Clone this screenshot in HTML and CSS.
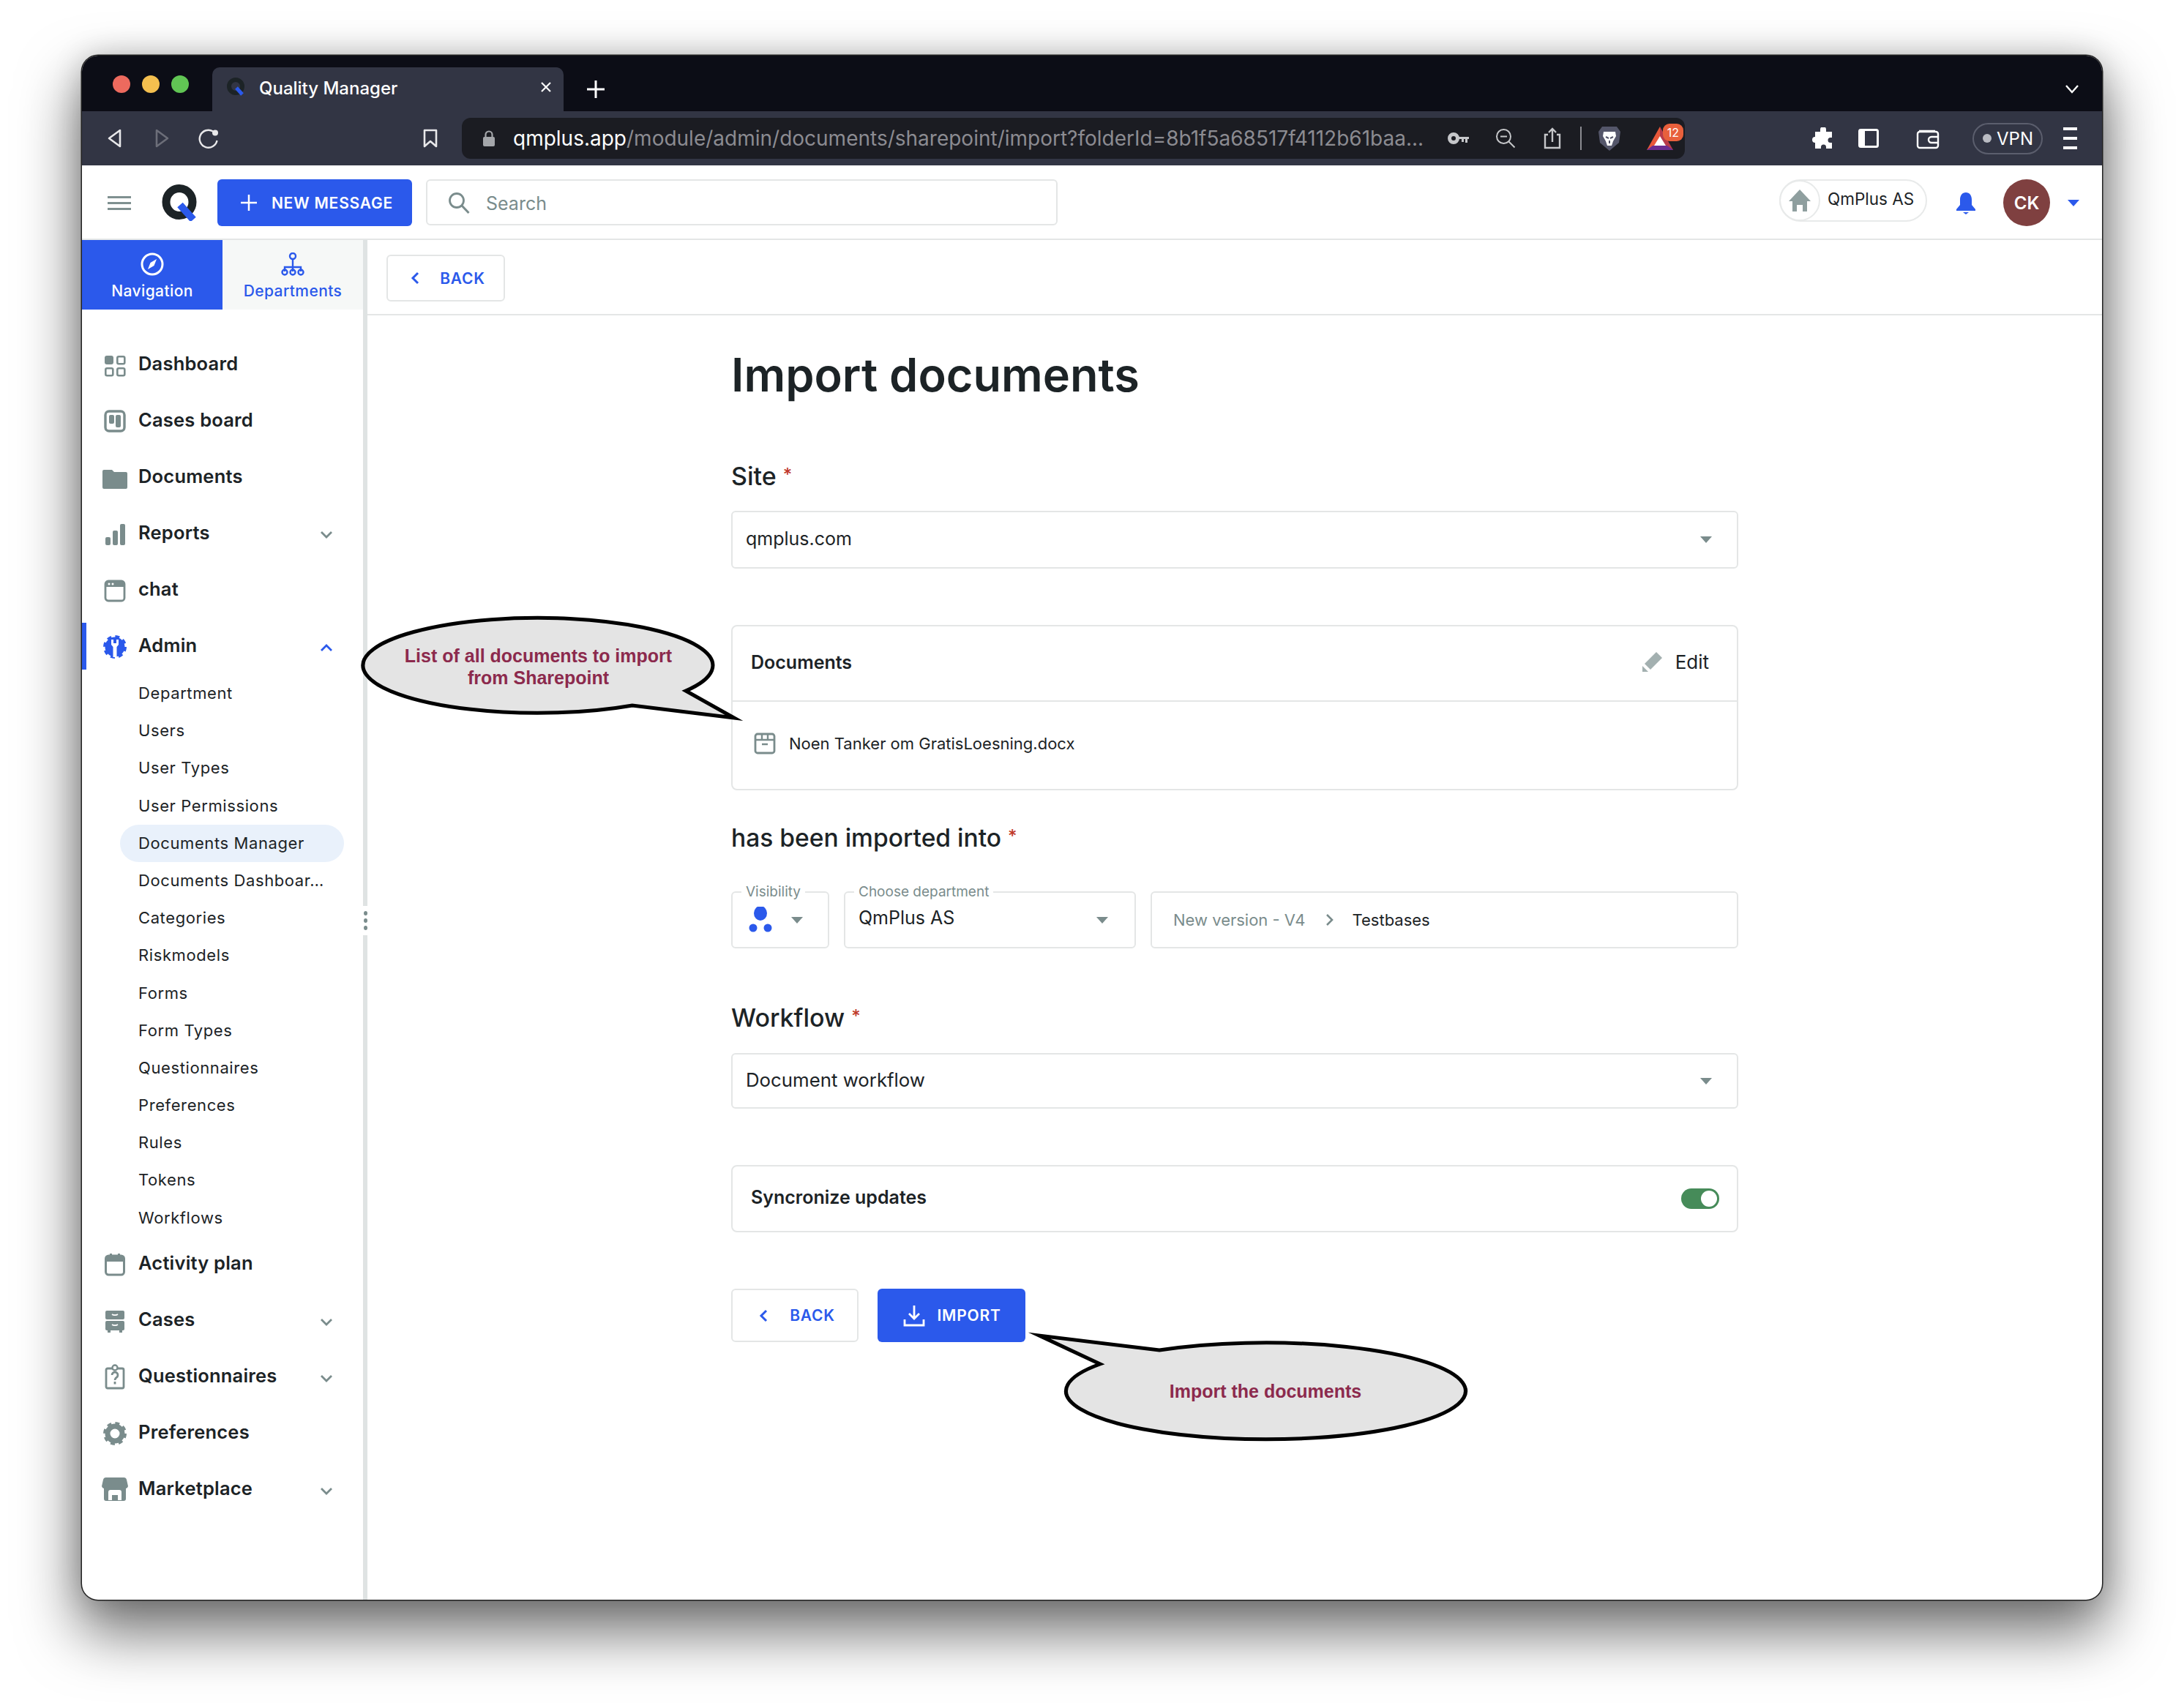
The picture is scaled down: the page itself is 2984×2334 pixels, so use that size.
FILE: index.html
```html
<!DOCTYPE html><html><head>
    <meta name="viewport" content="width=device-width, initial-scale=1">
    <title>Quality Manager</title>
    <link rel="stylesheet" href="styles.css">
  </head><body>
  <svg class="defs" width="0" height="0">
    <symbol id="down" viewBox="0 0 18 12"><path d="M2 2l7 7 7-7" fill="none" stroke="currentColor" stroke-width="2.800"/></symbol>
    <symbol id="gear" viewBox="0 0 36 36"><circle cx="18" cy="18" r="10" fill="none" stroke="currentColor" stroke-width="7"/><circle cx="18" cy="18" r="13.5" fill="none" stroke="currentColor" stroke-width="5" stroke-dasharray="5.6 5"/></symbol>
  </svg>
  <div class="window">

    <div class="tabstrip">
      <div class="lights"><i class="red"></i><i class="yellow"></i><i class="green"></i></div>
      <div class="tab">
        <svg width="24" height="26" viewBox="0 0 24 26"><circle cx="12" cy="12" r="9" fill="none" stroke="#1c2326" stroke-width="6"/><path d="M13 14l8 9" stroke="#2b59eb" stroke-width="5"/></svg>
        <span class="tab-title">Quality Manager</span>
        <svg class="tab-close" width="16" height="16" viewBox="0 0 16 16"><path d="M2 2l12 12M14 2L2 14" stroke="#fff" stroke-width="2.2"/></svg>
      </div>
      <svg class="newtab" width="24" height="24" viewBox="0 0 24 24"><path d="M12 0v24M0 12h24" stroke="#fff" stroke-width="3"/></svg>
      <svg class="tabs-more" width="20" height="14" viewBox="0 0 20 14"><path d="M2 2l8 9 8-9" fill="none" stroke="#fff" stroke-width="2.4"/></svg>
    </div>

    <div class="toolbar">
      <svg class="tb-back" width="20" height="26" viewBox="0 0 20 26"><path d="M17 2v22L2 13z" fill="none" stroke="#e8e8ea" stroke-width="2.6" stroke-linejoin="round"/></svg>
      <svg class="tb-forward" width="20" height="26" viewBox="0 0 20 26"><path d="M3 2v22l15-11z" fill="none" stroke="#6c6e79" stroke-width="2.6" stroke-linejoin="round"/></svg>
      <svg class="tb-reload" width="28" height="28" viewBox="0 0 28 28"><path d="M20 4.5A12 12 0 1 0 25.5 17" fill="none" stroke="#e8e8ea" stroke-width="2.4"/><circle cx="23" cy="6.500" r="4" fill="#e8e8ea"/></svg>
      <svg class="tb-bookmark" width="20" height="26" viewBox="0 0 20 26"><path d="M2 2h16v22l-8-7-8 7z" fill="none" stroke="#e8e8ea" stroke-width="2.6" stroke-linejoin="round"/></svg>
      <div class="omnibox">
        <svg class="lock" width="18" height="22" viewBox="0 0 18 22"><path d="M4.500 9V6a4.500 4.500 0 0 1 9 0v3" fill="none" stroke="#a4a6aa" stroke-width="2.2"/><rect x="1" y="9" width="16" height="13" rx="2" fill="#a4a6aa"/></svg>
        <div class="url"><span class="host">qmplus.app</span>/module/admin/documents/sharepoint/import?folderId=8b1f5a68517f4112b61baa...</div>
        <svg class="key" width="30" height="18" viewBox="0 0 30 18"><circle cx="8" cy="9" r="5.500" fill="none" stroke="#c6c7ca" stroke-width="5"/><path d="M14 7h15v3h-2v5h-3v-5h-2v4h-3v-4h-5z" fill="#c6c7ca"/></svg>
        <svg class="zoomout" width="28" height="28" viewBox="0 0 28 28"><circle cx="11.500" cy="11.500" r="9.500" fill="none" stroke="#c6c7ca" stroke-width="2"/><path d="M7 11.500h9M18.500 18.500l8 8" stroke="#c6c7ca" stroke-width="2"/></svg>
        <svg class="share" width="24" height="30" viewBox="0 0 24 30"><path d="M6 10H2v18h20V10h-4M12 20V2M7 7l5-5 5 5" fill="none" stroke="#c6c7ca" stroke-width="2.400"/></svg>
        <i class="omni-sep"></i>
        <svg class="lion" width="32" height="34" viewBox="0 0 32 34"><path d="M6 1h20l5 7-2 15-13 11L3 23 1 8z" fill="#54566a"/><path d="M8 8h16l1 6-4 7-2 6h-6l-2-6-4-7z" fill="#fff"/><path d="M11 15l4 2M21 15l-4 2M16 20v4" stroke="#54566a" stroke-width="2"/></svg>
        <div class="bat">
          <svg width="36" height="32" viewBox="0 0 36 32"><path d="M18 0L0 32h18z" fill="#e8583a"/><path d="M18 0l18 32H18z" fill="#b73a4a"/><path d="M0 32l8-6h20l8 6z" fill="#6b2d91"/><path d="M18 13l8 13H10z" fill="#fff"/></svg>
          <span class="bat-badge">12</span>
        </div>
      </div>
      <svg class="puzzle" width="30" height="30" viewBox="0 0 30 30"><path d="M11 3a4 4 0 0 1 8 0v3h8v8h-2a3.500 3.500 0 0 0 0 7h2v8h-8v-2a3.500 3.500 0 0 0-7 0v2H4v-8a4 4 0 0 1 0-8V6h7z" fill="#fff"/></svg>
      <svg class="panel" width="28" height="26" viewBox="0 0 28 26"><rect x="1.500" y="1.500" width="25" height="23" rx="2" fill="none" stroke="#fff" stroke-width="3"/><rect x="1" y="1" width="8" height="24" fill="#fff"/></svg>
      <svg class="wallet" width="32" height="30" viewBox="0 0 32 30"><path d="M4 5h22M2 9a3 3 0 0 1 3-3h22a3 3 0 0 1 3 3v16a3 3 0 0 1-3 3H5a3 3 0 0 1-3-3z" fill="none" stroke="#fff" stroke-width="2.400"/><path d="M30 13H21a4 4 0 0 0 0 8h9" fill="none" stroke="#fff" stroke-width="2.400"/></svg>
      <div class="vpn"><i></i>VPN</div>
      <div class="tb-menu"><i></i><i></i><i></i></div>
    </div>

    <div class="appbar">
      <div class="hamburger"><i></i><i></i><i></i></div>
      <svg class="logo" width="48" height="50" viewBox="0 0 48 50"><ellipse cx="24" cy="24" rx="18" ry="18.500" fill="none" stroke="#1c2326" stroke-width="11"/><path d="M25 28l18 20" stroke="#2b59eb" stroke-width="10"/></svg>
      <button class="btn btn-primary new-message">
        <svg width="22" height="22" viewBox="0 0 22 22"><path d="M11 0v22M0 11h22" stroke="#fff" stroke-width="2.500"/></svg>
        NEW MESSAGE
      </button>
      <div class="search">
        <svg width="30" height="30" viewBox="0 0 30 30"><circle cx="12" cy="12" r="9.500" fill="none" stroke="#7a8c8c" stroke-width="2.800"/><path d="M19 19l9.500 10" stroke="#7a8c8c" stroke-width="3"/></svg>
        <span>Search</span>
      </div>
      <div class="company">
        <span class="company-home"><svg width="32" height="30" viewBox="0 0 32 30"><path d="M16 0l15 16h-5v14h-6v-9h-8v9H6V16H1z" fill="#8f9f9f"/></svg></span>
        <span class="company-name">QmPlus AS</span>
      </div>
      <svg class="bell" width="28" height="30" viewBox="0 0 28 30"><path d="M14 0c5 0 8 4 8 10v7l5 6v2H1v-2l5-6v-7C6 4 9 0 14 0z" fill="#2b59eb"/><path d="M10 27h8l-4 3z" fill="#2b59eb"/></svg>
      <div class="avatar">CK</div>
      <i class="caret-blue"></i>
    </div>

    <div class="app">
      <aside class="sidebar">
        <div class="side-tabs">
          <div class="side-tab active">
            <svg width="32" height="32" viewBox="0 0 32 32"><circle cx="16" cy="16" r="14" fill="none" stroke="#fff" stroke-width="3"/><path d="M22 9l-8.500 5-3.500 9 8.500-5z" fill="#fff"/></svg>
            <span>Navigation</span>
          </div>
          <div class="side-tab">
            <svg width="32" height="32" viewBox="0 0 32 32"><g fill="none" stroke="#2b59eb" stroke-width="2.400"><circle cx="16" cy="5" r="4"/><path d="M16 9v9M5 26v-6h22v6M16 18v8"/><circle cx="5" cy="27" r="3.500"/><circle cx="16" cy="27" r="3.500"/><circle cx="27" cy="27" r="3.500"/></g></svg>
            <span>Departments</span>
          </div>
        </div>
        <nav class="nav">
          <div class="nav-item">
            <svg class="nav-icon" viewBox="0 0 36 36"><rect x="4" y="5" width="12" height="12" rx="3" fill="#7a8c8c"/><g fill="none" stroke="#7a8c8c" stroke-width="2.600"><rect x="21.300" y="6.300" width="10" height="10" rx="2"/><rect x="5.300" y="22.300" width="10" height="10" rx="2"/><rect x="21.300" y="22.300" width="10" height="10" rx="2"/></g></svg>
            <span>Dashboard</span>
          </div>
          <div class="nav-item">
            <svg class="nav-icon" viewBox="0 0 36 36"><rect x="5" y="4" width="26" height="27" rx="5" fill="none" stroke="#7a8c8c" stroke-width="3.400"/><rect x="10" y="9" width="7" height="12" rx="2" fill="#7a8c8c"/><rect x="19" y="9" width="7" height="17" rx="2" fill="#7a8c8c"/></svg>
            <span>Cases board</span>
          </div>
          <div class="nav-item">
            <svg class="nav-icon" viewBox="0 0 36 36"><path d="M1 9a2 2 0 0 1 2-2h11l3 3h16a2 2 0 0 1 2 2v19a2 2 0 0 1-2 2H3a2 2 0 0 1-2-2z" fill="#7a8c8c"/></svg>
            <span>Documents</span>
          </div>
          <div class="nav-item">
            <svg class="nav-icon" viewBox="0 0 36 36"><rect x="5" y="22" width="7" height="11" rx="2" fill="#7a8c8c"/><rect x="15" y="13" width="7" height="20" rx="2" fill="#7a8c8c"/><rect x="25" y="4" width="7" height="29" rx="2" fill="#7a8c8c"/></svg>
            <span>Reports</span>
            <svg class="chev"><use href="#down"/></svg>
          </div>
          <div class="nav-item">
            <svg class="nav-icon" viewBox="0 0 36 36"><rect x="5" y="5" width="26" height="27" rx="4" fill="none" stroke="#7a8c8c" stroke-width="2.800"/><path d="M5 9a4 4 0 0 1 4-4h18a4 4 0 0 1 4 4v4H5z" fill="#7a8c8c"/><circle cx="10" cy="9" r="1.500" fill="#fff"/><circle cx="15" cy="9" r="1.500" fill="#fff"/></svg>
            <span>chat</span>
          </div>
          <div class="nav-item open">
            <svg class="nav-icon gear-blue" viewBox="0 0 36 36"><use href="#gear"/><circle cx="18" cy="18" r="11" fill="#2b59eb"/><path d="M13 8h3v5h4V8h3v7l-2.500 3v14h-5V18L13 15z" fill="#fff"/></svg>
            <span>Admin</span>
            <svg class="chev up"><use href="#down"/></svg>
          </div>
          <div class="subnav">
            <div class="sub-item">Department</div>
            <div class="sub-item">Users</div>
            <div class="sub-item">User Types</div>
            <div class="sub-item">User Permissions</div>
            <div class="sub-item current">Documents Manager</div>
            <div class="sub-item">Documents Dashboar…</div>
            <div class="sub-item">Categories</div>
            <div class="sub-item">Riskmodels</div>
            <div class="sub-item">Forms</div>
            <div class="sub-item">Form Types</div>
            <div class="sub-item">Questionnaires</div>
            <div class="sub-item">Preferences</div>
            <div class="sub-item">Rules</div>
            <div class="sub-item">Tokens</div>
            <div class="sub-item">Workflows</div>
          </div>
          <div class="nav-item">
            <svg class="nav-icon" viewBox="0 0 36 36"><rect x="5.500" y="6" width="25" height="26" rx="4" fill="none" stroke="#7a8c8c" stroke-width="3"/><path d="M5 10a4 4 0 0 1 4-4h2V3h3v3h8V3h3v3h2a4 4 0 0 1 4 4v4H5z" fill="#7a8c8c"/></svg>
            <span>Activity plan</span>
          </div>
          <div class="nav-item">
            <svg class="nav-icon" viewBox="0 0 36 36"><rect x="5" y="4" width="26" height="12" rx="2" fill="#7a8c8c"/><rect x="5" y="18" width="26" height="13" rx="2" fill="#7a8c8c"/><path d="M14 9c2 1.500 6 1.500 8 0M14 23c2 1.500 6 1.500 8 0" fill="none" stroke="#fff" stroke-width="1.600"/><path d="M8 31h4v3H8zM24 31h4v3h-4z" fill="#7a8c8c"/></svg>
            <span>Cases</span>
            <svg class="chev"><use href="#down"/></svg>
          </div>
          <div class="nav-item">
            <svg class="nav-icon" viewBox="0 0 36 36"><rect x="6" y="6" width="24" height="27" rx="2" fill="none" stroke="#7a8c8c" stroke-width="2.800"/><circle cx="18" cy="5" r="3.500" fill="#fff" stroke="#7a8c8c" stroke-width="2.400"/><path d="M14 15a4 4 0 1 1 6 3.500c-1.500 1-2 1.500-2 3.500M18 24v3.500" fill="none" stroke="#7a8c8c" stroke-width="2.800"/></svg>
            <span>Questionnaires</span>
            <svg class="chev"><use href="#down"/></svg>
          </div>
          <div class="nav-item">
            <svg class="nav-icon gear-gray" viewBox="0 0 36 36"><use href="#gear"/></svg>
            <span>Preferences</span>
          </div>
          <div class="nav-item">
            <svg class="nav-icon" viewBox="0 0 36 36"><path d="M6 1h24a4 4 0 0 1 4 3l2 9a4 4 0 0 1-3 3v14a3 3 0 0 1-3 3H6a3 3 0 0 1-3-3V16a4 4 0 0 1-3-3l2-9a4 4 0 0 1 4-3z" fill="#7a8c8c"/><path d="M9 32V21a3 3 0 0 1 3-3h12a3 3 0 0 1 3 3v11h-5v-7h-8v7z" fill="#fff"/></svg>
            <span>Marketplace</span>
            <svg class="chev"><use href="#down"/></svg>
          </div>
        </nav>
        <div class="side-handle"><i></i><i></i><i></i></div>
      </aside>

      <main class="main">
        <div class="backbar">
          <button class="btn btn-outline back-top">
            <svg width="12" height="18" viewBox="0 0 12 18"><path d="M10 2L3 9l7 7" fill="none" stroke="#2b59eb" stroke-width="3"/></svg>
            BACK
          </button>
        </div>
        <div class="form">
          <h1>Import documents</h1>

          <h2 class="label label-site">Site <em>*</em></h2>
          <div class="select select-site">qmplus.com <i class="caret"></i></div>

          <div class="card docs">
            <div class="docs-head">
              <span class="docs-title">Documents</span>
              <span class="edit">
                <svg width="30" height="30" viewBox="0 0 30 30"><path d="M21 1l8 8L13 25l-8-8z" fill="#a3b0b0"/><path d="M2 20l8 8H2z" fill="#a3b0b0"/></svg>
                Edit
              </span>
            </div>
            <div class="doc-row">
              <svg width="30" height="30" viewBox="0 0 30 30"><rect x="2" y="2" width="26" height="26" rx="3" fill="none" stroke="#7a8c8c" stroke-width="2.800"/><path d="M2 10h26M11 2v8M19 2v8M11 16h8" stroke="#7a8c8c" stroke-width="2.400"/></svg>
              Noen Tanker om GratisLoesning.docx
            </div>
          </div>

          <h2 class="label label-into">has been imported into <em>*</em></h2>
          <div class="target-row">
            <div class="field field-vis">
              <span class="float">Visibility</span>
              <svg width="32" height="36" viewBox="0 0 32 36"><ellipse cx="16" cy="9" rx="9" ry="10" fill="#2b59eb"/><circle cx="6" cy="29" r="5.500" fill="#2b59eb"/><circle cx="26" cy="29" r="5.500" fill="#2b59eb"/></svg>
              <i class="caret"></i>
            </div>
            <div class="field field-dept">
              <span class="float">Choose department</span>
              <span class="dept-name">QmPlus AS</span>
              <i class="caret"></i>
            </div>
            <div class="field field-path">
              <span class="crumb">New version - V4</span>
              <svg width="12" height="18" viewBox="0 0 12 18"><path d="M2 2l7 7-7 7" fill="none" stroke="#7a8c8c" stroke-width="2.600"/></svg>
              <span class="crumb-last">Testbases</span>
            </div>
          </div>

          <h2 class="label label-flow">Workflow <em>*</em></h2>
          <div class="select select-flow">Document workflow <i class="caret"></i></div>

          <div class="card sync">
            <span>Syncronize updates</span>
            <div class="toggle"><i></i></div>
          </div>

          <div class="actions">
            <button class="btn btn-outline back-bottom">
              <svg width="12" height="18" viewBox="0 0 12 18"><path d="M10 2L3 9l7 7" fill="none" stroke="#2b59eb" stroke-width="3"/></svg>
              BACK
            </button>
            <button class="btn btn-primary import">
              <svg width="30" height="30" viewBox="0 0 30 30"><path d="M15 1v18M8 12l7 7 7-7M2 20v8h26v-8" fill="none" stroke="#fff" stroke-width="2.800"/></svg>
              IMPORT
            </button>
          </div>
        </div>
      </main>
    </div>

    <div class="callout callout-list">
      <svg width="530" height="160" viewBox="0 0 530 160"><path d="M371 129A239 65 0 1 1 444 109L510 146Z" fill="#e4e4e4" stroke="#000" stroke-width="5" stroke-miterlimit="12"/></svg>
      <div class="callout-text">List of all documents to import<br>from Sharepoint</div>
    </div>
    <div class="callout callout-import">
      <svg width="610" height="165" viewBox="0 0 610 165"><path d="M180 33A273 66 0 1 1 99 52L16 13Z" fill="#e4e4e4" stroke="#000" stroke-width="5" stroke-miterlimit="12"/></svg>
      <div class="callout-text">Import the documents</div>
    </div>
  </div>
  </body></html>
```

FILE: styles.css
```css
* {box-sizing: border-box;}
body {margin: 0; padding: 76px 0 0 112px; height: 2334px; overflow: hidden; background: #fff; font-family: Inter, "Noto Sans", sans-serif; color: #1c2326;}
.defs {position: absolute;}
i {display: block; font-style: normal;}
button {font-family: inherit;}

.window {position: relative; width: 2760px; height: 2110px; border-radius: 22px; overflow: hidden; background: #fff; display: flex; flex-direction: column;}
.window {box-shadow: 0 0 0 1.500px #222, 0 40px 80px 6px rgba(0,0,0,.55), 0 0 40px rgba(0,0,0,.18);}

/* browser chrome */
.tabstrip {height: 76px; background: #0c0d16; display: flex; align-items: flex-start; flex: none;}
.lights {display: flex; gap: 16px; margin: 27px 32px 0 42px;}
.lights i {width: 24px; height: 24px; border-radius: 50%;}
.red {background: #ed6a5e;}
.yellow {background: #f4bf4f;}
.green {background: #61c554;}
.tab {width: 480px; height: 60px; margin-top: 16px; background: #323544; border-radius: 10px 10px 0 0; display: flex; align-items: center; padding: 0 16px 6px 20px; color: #fff;}
.tab-title {margin: 3px 0 0 20px; font-size: 24px; font-weight: 500; flex: 1;}
.newtab {margin: 34px 0 0 32px;}
.tabs-more {margin: 39px 0 0 auto; margin-right: 31px;}

.toolbar {height: 74px; background: #323544; display: flex; align-items: center; flex: none; color: #fff;}
.tb-back {margin-left: 35px;}
.tb-forward {margin-left: 44px;}
.tb-reload {margin-left: 40px;}
.tb-bookmark {margin-left: 279px;}
.omnibox {width: 1671px; height: 56px; margin-left: 33px; background: #1b1c22; border-radius: 12px; display: flex; align-items: center; padding-left: 28px;}
.url {margin-left: 24px; width: 1260px; font-size: 28px; color: #8b8b91; white-space: nowrap; overflow: hidden;}
.host {color: #fff;}
.key {margin-left: 17px;}
.zoomout {margin-left: 35px;}
.share {margin-left: 38px;}
.omni-sep {width: 2px; height: 32px; background: #8b8b91; margin-left: 26px;}
.lion {margin-left: 22px;}
.bat {position: relative; margin-left: 35px; height: 32px;}
.bat-badge {position: absolute; left: 22px; top: -4px; width: 28px; height: 24px; border-radius: 9px; background: #e8603c; color: #fff; font-size: 16px; line-height: 24px; text-align: center;}
.puzzle {margin-left: 174px;}
.panel {margin-left: 33px;}
.wallet {margin-left: 51px;}
.vpn {margin-left: 45px; width: 96px; height: 43px; border: 2px solid #5b5e6d; border-radius: 22px; display: flex; align-items: center; padding-left: 12px; gap: 7px; font-size: 24px; color: #fff;}
.vpn i {width: 12px; height: 12px; border-radius: 50%; background: #b9bbc2;}
.tb-menu {margin-left: 28px; width: 19px; display: flex; flex-direction: column; gap: 9px;}
.tb-menu i {height: 4px; background: #fff;}

/* app header */
.appbar {height: 102px; flex: none; border-bottom: 2px solid #e4e6e6; display: flex; align-items: flex-start; padding-top: 19px;}
.hamburger {margin: 23px 0 0 35px; width: 32px; display: flex; flex-direction: column; gap: 5px;}
.hamburger i {height: 3px; background: #7f9090;}
.logo {margin: 7px 0 0 42px;}
.btn {display: flex; align-items: center; justify-content: center; border-radius: 6px; font-weight: 600; font-size: 21px; letter-spacing: .8px; border: 0; padding: 0;}
.btn-primary {background: #2b59eb; color: #fff;}
.btn-outline {background: #fff; color: #2b59eb; border: 2px solid #e4e6e6;}
.new-message {margin-left: 28px; width: 266px; height: 64px; gap: 20px; padding-left: 6px;}
.search {margin-left: 19px; width: 863px; height: 63px; border: 2px solid #e4e6e6; border-radius: 6px; display: flex; align-items: center; padding-left: 28px; gap: 22px; color: #7a8c8c; font-size: 25px;}
.search span {margin-top: 2px;}
.company {margin-left: auto; width: 202px; height: 58px; border: 2px solid #e8eaea; border-radius: 29px; display: flex; align-items: center;}
.company-home {width: 56px; height: 56px; border: 2px solid #e8eaea; border-radius: 50%; display: flex; align-items: center; justify-content: center; margin-left: -2px;}
.company-name {margin: -6px 0 0 10px; font-size: 22.500px;}
.bell {margin: 18px 0 0 39px;}
.avatar {margin-left: 37px; width: 64px; height: 64px; border-radius: 50%; background: #7f4040; color: #fff; font-weight: 600; font-size: 24px; display: flex; align-items: center; justify-content: center;}
.caret-blue {margin: 28px 31px 0 24px; border-left: 8px solid transparent; border-right: 8px solid transparent; border-top: 9px solid #2b59eb;}

.app {flex: 1; display: flex; min-height: 0;}

/* sidebar */
.sidebar {position: relative; width: 390px; flex: none; border-right: 6px solid #dfe3e3;}
.side-tabs {display: flex; height: 95px;}
.side-tab {width: 192px; background: #f6f8f7; color: #2b59eb; display: flex; flex-direction: column; align-items: center; padding-top: 17px; gap: 8px; font-size: 21px; font-weight: 500; letter-spacing: .4px;}
.side-tab.active {background: #2b59eb; color: #fff;}
.nav {padding-top: 37px;}
.nav-item {position: relative; height: 77px; display: flex; align-items: center; padding-left: 27px; gap: 14px; font-size: 25.500px; font-weight: 600; letter-spacing: .2px;}
.nav-item span {margin-top: -5px;}
.nav-icon {width: 36px; height: 36px; flex: none;}
.gear-blue {color: #2b59eb;}
.gear-gray {color: #7a8c8c;}
.chev {position: absolute; left: 325px; top: 34px; width: 18px; height: 12px; color: #7a8c8c;}
.chev.up {transform: rotate(180deg); color: #2b59eb;}
.nav-item.open::before {content: ""; position: absolute; left: 0; top: 6px; width: 6px; height: 64px; background: #2b59eb;}
.sub-item {height: 51.200px; line-height: 51.200px; padding-left: 77px; font-size: 22px; letter-spacing: .6px; white-space: nowrap;}
.sub-item.current {margin-left: 52px; padding-left: 25px; width: 306px; border-radius: 26px; background: #e9f1fb;}
.side-handle {position: absolute; right: -6px; top: 910px; width: 6px; height: 40px; background: #fff; display: flex; flex-direction: column; align-items: center; justify-content: center; gap: 4px;}
.side-handle i {width: 5px; height: 6px; border-radius: 50%; background: #7a8c8c;}

/* main */
.main {flex: 1;}
.backbar {height: 103px; border-bottom: 2px solid #e4e6e6; padding: 20px 0 0 26px;}
.back-top {width: 162px; height: 64px; gap: 28px; padding-left: 6px;}
.form {margin-left: 497px; width: 1376px;}
h1 {margin: 41px 0 0; font-size: 63px; line-height: 80px; font-weight: 600;}
.label {margin: 0; font-size: 34px; line-height: 44px; font-weight: 500;}
.label em {color: #c0392b; font-style: normal; font-size: 24px; vertical-align: 6px;}
.label-site {margin-top: 75px;}
.label-into {margin-top: 41px; font-size: 33.600px;}
.label-flow {margin-top: 71px;}
.select {position: relative; border: 2px solid #e4e6e6; border-radius: 6px; display: flex; align-items: center; justify-content: space-between; padding: 0 34px 4px 18px; font-size: 26px;}
.select .caret {margin-top: 4px;}
.select-site {margin-top: 25px; height: 79px; font-size: 25px;}
.select-flow {margin-top: 26px; height: 76px; font-size: 25.800px;}
.caret {border-left: 8px solid transparent; border-right: 8px solid transparent; border-top: 9px solid #7a8c8c; width: 0; flex: none;}
.card {border: 2px solid #e4e6e6; border-radius: 8px;}
.docs {margin-top: 77px; height: 226px;}
.docs-head {height: 103px; border-bottom: 2px solid #e4e6e6; display: flex; align-items: center; justify-content: space-between; padding: 0 38px 4px 25px; font-size: 26px;}
.docs-title {font-weight: 600; font-size: 25px;}
.edit {display: flex; align-items: center; gap: 17px;}
.doc-row {display: flex; align-items: center; gap: 18px; padding: 42px 0 0 29px; font-size: 22px;}
.target-row {margin-top: 51px; display: flex; gap: 20px; height: 78px;}
.field {position: relative; border: 2px solid #e4e6e6; border-radius: 6px; display: flex; align-items: center;}
.float {position: absolute; left: 12px; top: -13px; padding: 0 6px; background: #fff; color: #7a8c8c; font-size: 19px; line-height: 24px; white-space: nowrap;}
.field-vis {width: 134px; padding-left: 22px; gap: 26px;}
.field-dept {width: 399px; padding: 0 36px 0 18px; justify-content: space-between;}
.dept-name {font-size: 25px; margin-top: -6px;}
.field-path {flex: 1; padding-left: 29px; font-size: 22px;}
.crumb {color: #7a8c8c; margin-right: 27px;}
.crumb-last {margin-left: 25px;}
.sync {margin-top: 77px; height: 92px; display: flex; align-items: center; justify-content: space-between; padding: 0 24px 0 25px; font-size: 25px; font-weight: 600;}
.sync span {margin-top: -4px;}
.toggle {width: 52px; height: 28px; border-radius: 14px; background: #468b59; display: flex; align-items: center; justify-content: flex-end; padding-right: 3px;}
.toggle i {width: 22px; height: 22px; border-radius: 50%; background: #fff;}
.actions {margin-top: 77px; display: flex; gap: 26px;}
.back-bottom {width: 174px; height: 73px; gap: 30px; padding-left: 6px;}
.import {width: 202px; height: 73px; gap: 16px; padding-left: 2px;}

/* annotations lying over the page */
.callout {position: absolute; font-family: "Liberation Sans", Arial, sans-serif; font-weight: 700; color: #8c2a4d; font-size: 25px; line-height: 30px; text-align: center;}
.callout svg {display: block;}
.callout-list {left: 381px; top: 759px;}
.callout-list .callout-text {position: absolute; left: 0; top: 46px; width: 485px;}
.callout-import {left: 1292px; top: 1736px;}
.callout-import .callout-text {position: absolute; left: 50px; top: 74px; width: 550px;}
```
